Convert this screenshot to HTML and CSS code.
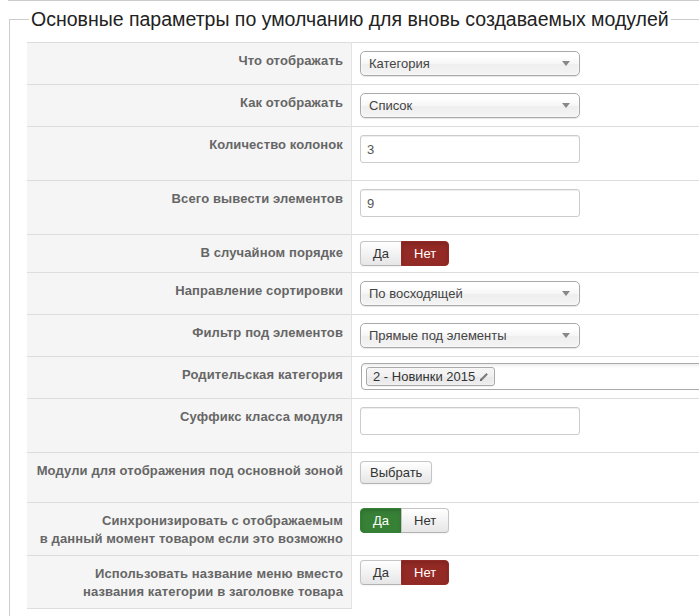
FILE: index.html
```html
<!DOCTYPE html>
<html lang="ru">
<head>
    <meta charset="UTF-8">
    <title>Параметры модулей</title>
    <link rel="stylesheet" href="styles.css">
</head>
<body>
    <div class="page">
        <fieldset class="panel">
            <legend>Основные параметры по умолчанию для вновь создаваемых модулей</legend>
            <table class="params">
                <tr>
                    <th>Что отображать</th>
                    <td><div class="chzn"><span>Категория</span><b></b></div></td>
                </tr>
                <tr>
                    <th>Как отображать</th>
                    <td><div class="chzn"><span>Список</span><b></b></div></td>
                </tr>
                <tr>
                    <th>Количество колонок</th>
                    <td><input class="text-input" type="text" value="3"></td>
                </tr>
                <tr>
                    <th>Всего вывести элементов</th>
                    <td><input class="text-input" type="text" value="9"></td>
                </tr>
                <tr>
                    <th>В случайном порядке</th>
                    <td>
                        <div class="btn-group short">
                            <span class="btn">Да</span><span class="btn active-no">Нет</span>
                        </div>
                    </td>
                </tr>
                <tr>
                    <th>Направление сортировки</th>
                    <td><div class="chzn"><span>По восходящей</span><b></b></div></td>
                </tr>
                <tr>
                    <th>Фильтр под элементов</th>
                    <td><div class="chzn"><span>Прямые под элементы</span><b></b></div></td>
                </tr>
                <tr>
                    <th>Родительская категория</th>
                    <td>
                        <div class="chzn-multi">
                            <span class="choice">2 - Новинки 2015
                                <svg class="pencil" width="10" height="10" viewBox="0 0 10 10">
                                    <path d="M1 9 L1.7 6.8 L7.4 1.1 L8.9 2.6 L3.2 8.3 Z" fill="#7a7a7a"/>
                                    <path d="M1 9 L1.7 6.8 L3.2 8.3 Z" fill="#444"/>
                                </svg>
                            </span>
                        </div>
                    </td>
                </tr>
                <tr>
                    <th>Суффикс класса модуля</th>
                    <td><input class="text-input" type="text" value=""></td>
                </tr>
                <tr>
                    <th>Модули для отображения под основной зоной</th>
                    <td><button class="plain-btn" type="button">Выбрать</button></td>
                </tr>
                <tr>
                    <th>Синхронизировать с отображаемым<br>в данный момент товаром если это возможно</th>
                    <td>
                        <div class="btn-group up3">
                            <span class="btn active-yes">Да</span><span class="btn">Нет</span>
                        </div>
                    </td>
                </tr>
                <tr class="last">
                    <th>Использовать название меню вместо<br>названия категории в заголовке товара</th>
                    <td>
                        <div class="btn-group up4">
                            <span class="btn">Да</span><span class="btn active-no">Нет</span>
                        </div>
                    </td>
                </tr>
            </table>
        </fieldset>
    </div>
</body>
</html>
```

FILE: styles.css
```css
html, body {
    overflow: hidden;
}
body {
    margin: 0;
    background: #fff;
    color: #333;
    font-family: "Liberation Sans", Arial, sans-serif;
    font-size: 13px;
    line-height: 18px;
}
.page {
    margin-left: 8px;
    border-top: 1px solid #ccc;
}
.panel {
    margin: 4px 0 0 1px;
    padding: 0 0 20px 17px;
    border: 1px solid #ccc;
}
.panel legend {
    margin-left: 2px;
    padding: 0 2px;
    font-size: 19.5px;
    line-height: 28px;
    color: #222;
}
.params {
    width: 1000px;
    margin-top: 9px;
    border-collapse: collapse;
}
.params th,
.params td {
    padding: 8px;
    border-top: 1px solid #ddd;
    vertical-align: top;
    text-align: left;
}
.params th {
    width: 308px;
    padding: 9px 8px 7px;
    background: #f5f5f5;
    border-right: 1px solid #e3e3e3;
    color: #666;
    font-weight: bold;
    letter-spacing: 0.12px;
    text-align: right;
}
.params .last th {
    border-bottom: 1px solid #ddd;
}

/* chosen-like select */
.chzn {
    position: relative;
    box-sizing: border-box;
    width: 220px;
    height: 25px;
    padding-left: 8px;
    border: 1px solid #aaa;
    border-radius: 5px;
    background: linear-gradient(#fff 20%, #f6f6f6 50%, #eee 52%, #f4f4f4 100%);
    box-shadow: 0 0 3px #fff inset, 0 1px 1px rgba(0, 0, 0, 0.1);
    color: #444;
    line-height: 23px;
}
.chzn b {
    position: absolute;
    top: 9px;
    right: 9px;
    border-left: 4px solid transparent;
    border-right: 4px solid transparent;
    border-top: 5px solid #888;
}

.text-input {
    box-sizing: border-box;
    display: block;
    width: 220px;
    height: 28px;
    margin: 0 0 9px;
    padding: 4px 6px;
    border: 1px solid #ccc;
    border-radius: 3px;
    box-shadow: inset 0 1px 1px rgba(0, 0, 0, 0.075);
    font: 13px/18px "Liberation Sans", Arial, sans-serif;
    color: #555;
    outline: none;
}

/* yes / no toggles */
.btn-group {
    display: flex;
    margin: -2px 0;
}
.btn-group.up3 {
    margin: -3px 0 0;
}
.btn-group.up4 {
    margin: -4px 0 0;
}
.btn {
    box-sizing: border-box;
    height: 25px;
    padding: 3px 12px;
    border: 1px solid #c5c5c5;
    border-bottom-color: #b3b3b3;
    background: linear-gradient(#fff, #e6e6e6);
    box-shadow: inset 0 1px 0 rgba(255, 255, 255, 0.2), 0 1px 2px rgba(0, 0, 0, 0.05);
    color: #333;
    line-height: 17px;
}
.btn:first-child {
    border-radius: 4px 0 0 4px;
}
.btn:last-child {
    margin-left: -1px;
    border-radius: 0 4px 4px 0;
}
.btn.active-no {
    background: #942a25;
    border-color: #942a25;
    color: #fff;
    box-shadow: inset 0 2px 4px rgba(0, 0, 0, 0.15);
}
.btn.active-yes {
    background: #378137;
    border-color: #378137;
    color: #fff;
    box-shadow: inset 0 2px 4px rgba(0, 0, 0, 0.15);
}

.plain-btn {
    display: block;
    box-sizing: border-box;
    height: 23px;
    margin-bottom: 10px;
    padding: 2px 9px;
    border: 1px solid #c5c5c5;
    border-bottom-color: #b3b3b3;
    border-radius: 4px;
    background: linear-gradient(#fff, #e6e6e6);
    box-shadow: 0 1px 2px rgba(0, 0, 0, 0.05);
    font: 13px/17px "Liberation Sans", Arial, sans-serif;
    color: #333;
}

/* chosen-like multi select */
.chzn-multi {
    box-sizing: border-box;
    width: 620px;
    height: 27px;
    margin: -2px 0 0 1px;
    padding: 3px 0 0 4px;
    border: 1px solid #aaa;
    border-radius: 4px;
    background: linear-gradient(#eee 1%, #fff 15%);
}
.choice {
    display: inline-flex;
    align-items: center;
    gap: 4px;
    box-sizing: border-box;
    height: 19px;
    padding: 0 5px 0 6px;
    border: 1px solid #aaa;
    border-radius: 3px;
    background: linear-gradient(#f4f4f4 20%, #f0f0f0 50%, #e8e8e8 52%, #eee 100%);
    box-shadow: 0 0 2px #fff inset, 0 1px 0 rgba(0, 0, 0, 0.05);
    color: #333;
    line-height: 17px;
}
```
